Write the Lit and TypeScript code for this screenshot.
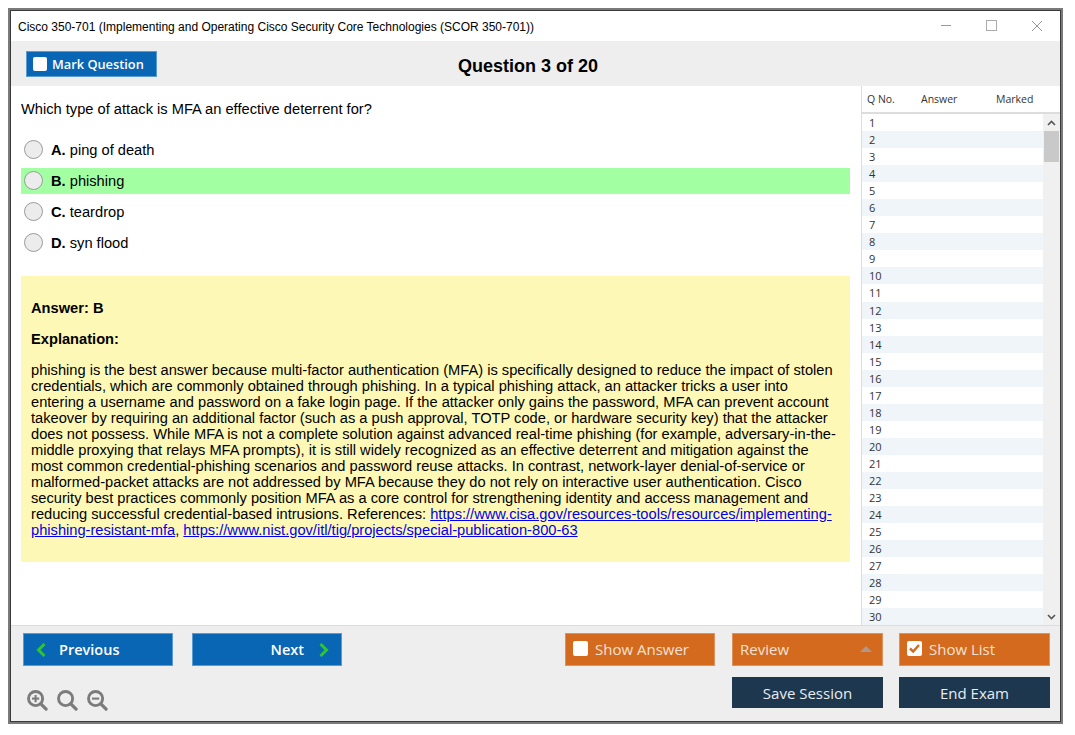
import { LitElement, html, css, svg } from "lit";
import { customElement } from "lit/decorators.js";

const opts = [["A.", "ping of death", false], ["B.", "phishing", true], ["C.", "teardrop", false], ["D.", "syn flood", false]] as const;

const zoomIcon = (kind: string) => html`<svg class="zi" viewBox="0 0 22 22" width="21" height="21" fill="none" stroke="#7b7b7b">
  <circle cx="9" cy="9" r="7.4" stroke-width="3"></circle>
  <path d="M14.5 14.5 L20 20" stroke-width="3.4" stroke-linecap="round"></path>
  ${kind !== "o" ? svg`<path d="M5.2 9 H12.8" stroke-width="2.2"></path>` : ""}
  ${kind === "+" ? svg`<path d="M9 5.2 V12.8" stroke-width="2.2"></path>` : ""}
</svg>`;

const chevron = (left: boolean) => html`<svg class="chev" viewBox="0 0 10 14" width="10" height="14" fill="none" stroke="#2fc52f" stroke-width="3">
  <path d=${left ? "M8.5 1 L2.5 7 L8.5 13" : "M1.5 1 L7.5 7 L1.5 13"}></path>
</svg>`;

@customElement("app-root")
export class AppRoot extends LitElement {
  static styles = css`
    :host { display: block; width: 1075px; height: 735px; background: #fff; font-family: "Liberation Sans", Arial, sans-serif; color: #000; overflow: hidden; }
    * { box-sizing: border-box; }
    .win { margin: 8px 0 0 8px; width: 1055px; height: 716px; border: 2px solid #7a7a7a; display: flex; flex-direction: column; }
    .inner { flex: 1; min-height: 0; border: 1px solid #3a3a3a; display: flex; flex-direction: column; }
    .title { height: 30px; background: #fff; display: flex; align-items: center; padding-left: 7px; font-size: 12px; flex: none; }
    .title .t { flex: 1; position: relative; top: 1px; }
    .wc { display: flex; align-items: center; height: 30px; position: relative; }
    .wc svg { display: block; }
    .wc .b { width: 46px; display: flex; justify-content: center; }
    .tool { height: 45px; background: #eee; flex: none; position: relative; display: flex; align-items: center; justify-content: center; }
    .tool h1 { margin: 0 15px 0 0; font-size: 18px; font-weight: bold; position: relative; top: 3px; }
    .mark { position: absolute; left: 15px; top: 10px; width: 131px; height: 26px; background: #0866b5; border: 1px solid #5b9bd0; color: #fff; font: 600 12.8px "Open Sans", sans-serif; display: flex; align-items: center; padding-left: 6px; gap: 5px; }
    .cb { width: 14px; height: 14px; background: #fff; border-radius: 2px; display: block; flex: none; }
    .body { flex: 1; min-height: 0; display: flex; background: #fff; }
    .main { width: 850px; padding: 0 11px 0 10px; flex: none; }
    .q { margin: 14px 0 19px; font-size: 14.67px; line-height: 18px; }
    .opt { height: 26px; margin-bottom: 5px; display: flex; align-items: center; padding-left: 3px; font-size: 14.67px; gap: 8px; }
    .opt.hl { background: #a2ffa2; }
    .radio { width: 19px; height: 19px; border-radius: 50%; background: #ececec; border: 1px solid #9a9a9a; flex: none; position: relative; top: -1px; }
    .box { margin-top: 20px; height: 286px; background: #fef8b6; padding: 24px 10px 0; font-size: 14.67px; line-height: 16px; }
    .box p { margin: 0 0 15px; }
    .box a { color: #00e; text-decoration: underline; }
    .side { flex: 1; border-left: 1px solid #ddd; display: flex; flex-direction: column; min-width: 0; font: 10.5px "Open Sans", sans-serif; color: #333; }
    .hd { height: 28px; border-bottom: 2px solid #ddd; display: grid; grid-template-columns: 54px 75px 1fr; padding: 0 0 0 5px; align-items: center; }
    .lst { flex: 1; min-height: 0; display: flex; }
    .rows { flex: 1; min-width: 0; overflow: hidden; }
    .row { height: 17.05px; line-height: 17px; padding-left: 7px; font-size: 11px; }
    .row.alt { background: #f0f5f9; }
    .sb { width: 17px; background: #f0f0f0; flex: none; position: relative; display: flex; flex-direction: column; }
    .sb .arr { height: 17px; display: flex; align-items: center; justify-content: center; }
    .thumb { height: 31px; background: #c9c9c9; margin: 0 1px; }
    .foot { height: 96px; background: #eee; flex: none; border-top: 1px solid #ddd; display: flex; justify-content: space-between; padding: 7px 10px 0 12px; }
    .fl { display: flex; flex-direction: column; }
    .nav { display: flex; gap: 19px; }
    .btn { width: 151px; height: 33px; display: flex; align-items: center; color: #fff; font: 15px "Open Sans", sans-serif; border: 1px solid transparent; }
    .blue { width: 150px; background: #0866b5; border-color: #5b9bd0; font-weight: 600; font-size: 14.5px; }
    .prev { padding-left: 12px; gap: 13px; }
    .next { justify-content: flex-end; padding-right: 12px; gap: 15px; }
    .zooms { display: flex; gap: 9px; margin-top: 24px; margin-left: 4px; }
    .zi { display: block; }
    .fr { width: 485px; display: grid; grid-template-columns: 167px 167px 151px; row-gap: 11px; align-content: start; }
    .or { background: #d46a1e; border-color: #e0905a; color: #f3e2d5; padding: 0 0 2px 7px; gap: 7px; }
    .or.first { width: 150px; }
    .or .cb { width: 15px; height: 15px; }
    .rev { justify-content: space-between; padding-right: 10px; }
    .tri { width: 0; height: 0; border-left: 6px solid transparent; border-right: 6px solid transparent; border-bottom: 6px solid #b0978a; }
    .navy { background: #1d374f; color: #e8edf1; justify-content: center; height: 31px; }
    .sp { visibility: hidden; }
  `;

  render() {
    const rows = Array.from({ length: 30 }, (_, i) => i + 1);
    return html`<div class="win"><div class="inner">
      <div class="title">
        <span class="t">Cisco 350-701 (Implementing and Operating Cisco Security Core Technologies (SCOR 350-701))</span>
        <div class="wc">
          <span class="b"><svg width="12" height="12" fill="none" stroke="#999"><path d="M2 5.5H12"></path></svg></span>
          <span class="b"><svg width="12" height="12" fill="none" stroke="#aaa"><rect x="1.5" y=".5" width="10" height="10"></rect></svg></span>
          <span class="b"><svg width="12" height="12" fill="none" stroke="#999"><path d="M1 1L11 11M11 1L1 11"></path></svg></span>
        </div>
      </div>
      <div class="tool">
        <button class="mark"><span class="cb"></span>Mark Question</button>
        <h1>Question 3 of 20</h1>
      </div>
      <div class="body">
        <div class="main">
          <div class="q">Which type of attack is MFA an effective deterrent for?</div>
          ${opts.map(([l, t, h]) => html`<div class="opt ${h ? "hl" : ""}"><span class="radio"></span><span><b>${l}</b> ${t}</span></div>`)}
          <div class="box">
            <p><b>Answer: B</b></p>
            <p><b>Explanation:</b></p>
            <p>phishing is the best answer because multi-factor authentication (MFA) is specifically designed to reduce the impact of stolen credentials, which are commonly obtained through phishing. In a typical phishing attack, an attacker tricks a user into entering a username and password on a fake login page. If the attacker only gains the password, MFA can prevent account takeover by requiring an additional factor (such as a push approval, TOTP code, or hardware security key) that the attacker does not possess. While MFA is not a complete solution against advanced real-time phishing (for example, adversary-in-the-middle proxying that relays MFA prompts), it is still widely recognized as an effective deterrent and mitigation against the most common credential-phishing scenarios and password reuse attacks. In contrast, network-layer denial-of-service or malformed-packet attacks are not addressed by MFA because they do not rely on interactive user authentication. Cisco security best practices commonly position MFA as a core control for strengthening identity and access management and reducing successful credential-based intrusions. References: <a href="#">https://www.cisa.gov/resources-tools/resources/implementing-phishing-resistant-mfa</a>, <a href="#">https://www.nist.gov/itl/tig/projects/special-publication-800-63</a></p>
          </div>
        </div>
        <div class="side">
          <div class="hd"><span>Q No.</span><span>Answer</span><span>Marked</span></div>
          <div class="lst">
            <div class="rows">${rows.map((n) => html`<div class="row ${n % 2 === 0 ? "alt" : ""}">${n}</div>`)}</div>
            <div class="sb">
              <span class="arr"><svg width="9" height="6" fill="none" stroke="#555" stroke-width="1.6"><path d="M1 5L4.5 1.5L8 5"></path></svg></span>
              <div class="thumb"></div>
              <span class="sp" style="flex:1"></span>
              <span class="arr"><svg width="9" height="6" fill="none" stroke="#555" stroke-width="1.6"><path d="M1 1L4.5 4.5L8 1"></path></svg></span>
            </div>
          </div>
        </div>
      </div>
      <div class="foot">
        <div class="fl">
          <div class="nav">
            <div class="btn blue prev">${chevron(true)}Previous</div>
            <div class="btn blue next">Next${chevron(false)}</div>
          </div>
          <div class="zooms">${zoomIcon("+")}${zoomIcon("o")}${zoomIcon("-")}</div>
        </div>
        <div class="fr">
          <div class="btn or first"><span class="cb"></span>Show Answer</div>
          <div class="btn or rev">Review<span class="tri"></span></div>
          <div class="btn or"><svg class="cb" viewBox="0 0 15 15"><path d="M3 7.5L6.2 10.5L12 4" fill="none" stroke="#d46a1e" stroke-width="2.4"></path></svg>Show List</div>
          <div class="sp"></div>
          <div class="btn navy">Save Session</div>
          <div class="btn navy">End Exam</div>
        </div>
      </div>
    </div></div>`;
  }
}
